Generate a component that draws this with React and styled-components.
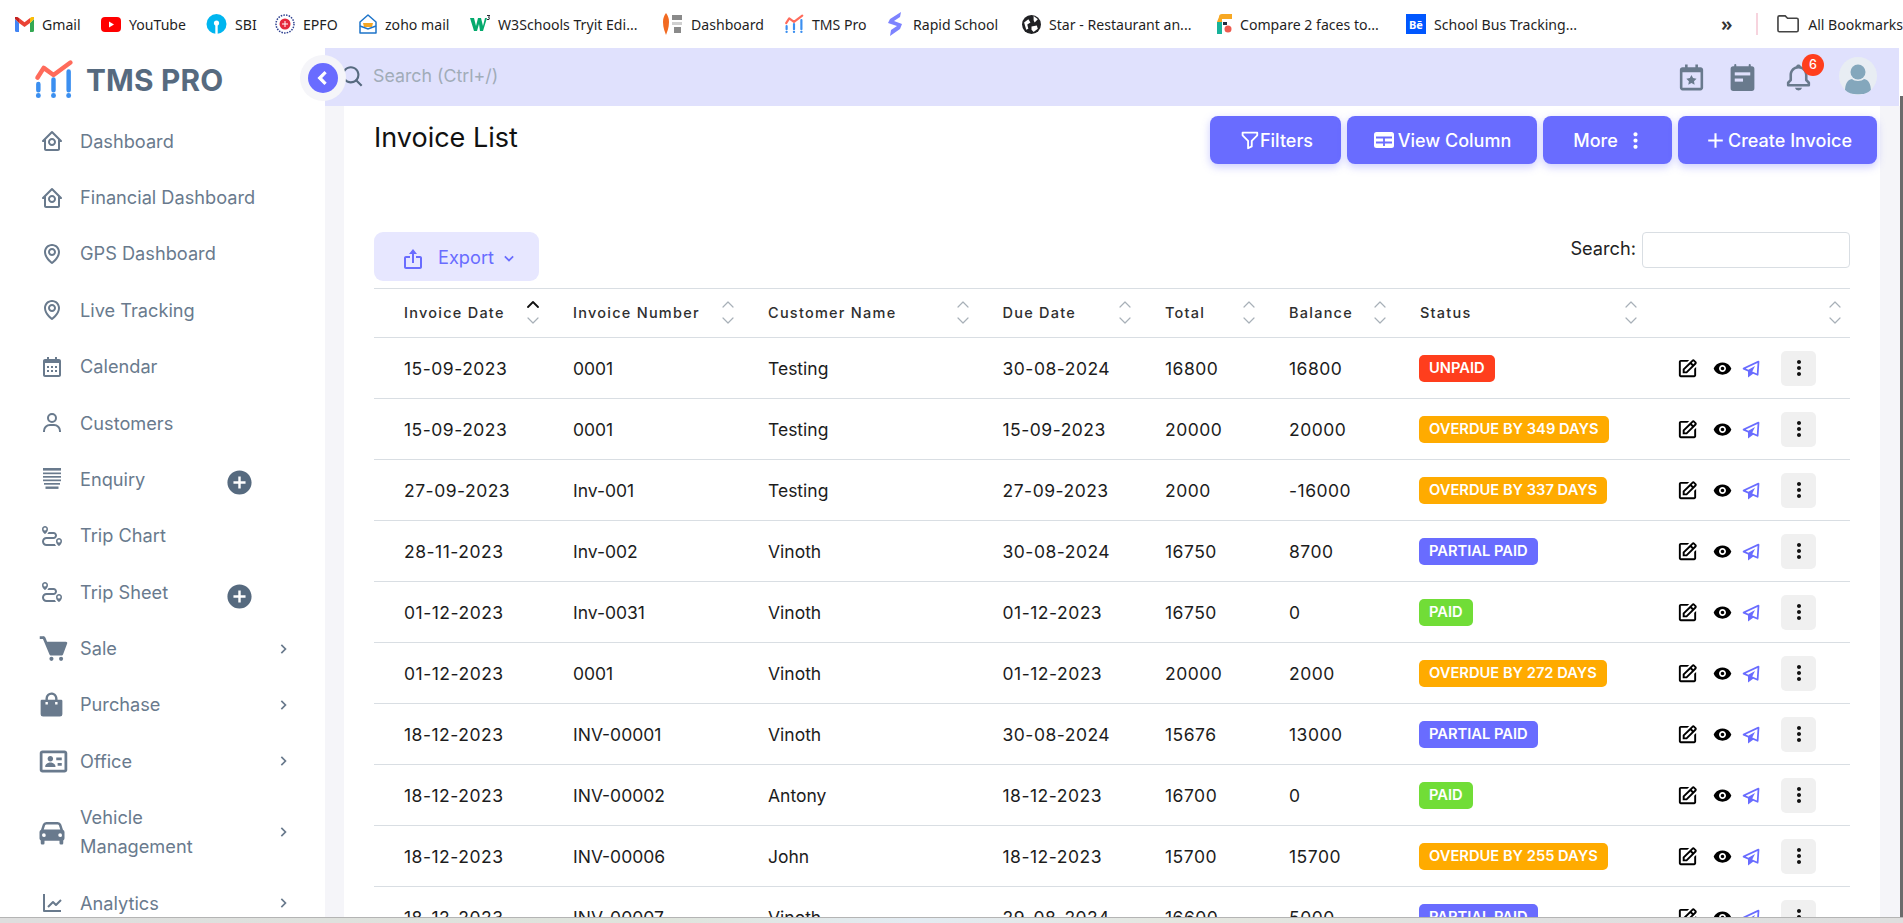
import React from "react"
import styled, { createGlobalStyle } from "styled-components"
import {
  BiHomeCircle, BiMap, BiCalendar, BiUser, BiTrip, BiSolidCart, BiSolidShoppingBag,
  BiIdCard, BiSolidCar, BiLineChart, BiChevronRight, BiChevronLeft, BiChevronDown, BiSearch,
  BiExport, BiFilterAlt, BiPlus, BiSolidPlusCircle, BiCalendarStar, BiBell,
  BiDotsVerticalRounded, BiEdit, BiSolidShow, BiPaperPlane,
} from "react-icons/bi"

const PRIMARY = "#696cff"
const SLATE = "#697a8d"
const PAGE_BG = "#f5f5f9"
const LINE = "#d9dee3"
const FONT = `Inter, "Noto Sans", sans-serif`

const GlobalStyle = createGlobalStyle`
  html, body { margin: 0; padding: 0; background: #fff; overflow: hidden; }
  * { box-sizing: border-box; }
`

const Shell = styled.div`
  position: relative;
  width: 1903px;
  height: 923px;
  display: flex;
  flex-direction: column;
  overflow: hidden;
  font-family: ${FONT};
  background: #fff;
`

/* browser bookmarks strip */
const BookmarkBar = styled.div`
  height: 48px;
  flex: none;
  display: flex;
  align-items: center;
  padding-left: 15px;
  background: #fff;
  font-family: "Noto Sans", sans-serif;
  font-size: 14.1px;
  color: #1f1f1f;
`

const Bookmark = styled.div`
  width: ${p => p.$w}px;
  flex: none;
  display: flex;
  align-items: center;
  gap: ${p => p.$gap || 8}px;
  white-space: nowrap;
`

const OverflowMark = styled.div`
  width: 35px;
  font-size: 20px;
  font-weight: 600;
  line-height: 1;
  color: #333;
`

const BarDivider = styled.div`
  width: 2px;
  height: 22px;
  background: #f7d4de;
  margin-right: 19px;
`

const BehanceIcon = styled.span`
  width: 20px;
  height: 20px;
  background: #0057ff;
  color: #fff;
  font-size: 11px;
  font-weight: 700;
  display: flex;
  align-items: center;
  justify-content: center;
`

const Main = styled.div`
  flex: 1;
  min-height: 0;
  display: flex;
  overflow: hidden;
`

const Sidebar = styled.aside`
  position: relative;
  width: 325px;
  flex: none;
  background: #fff;
  z-index: 2;
`

const Brand = styled.div`
  height: 65px;
  display: flex;
  align-items: center;
  gap: 12px;
  padding-left: 33px;
  padding-bottom: 2px;
`

const BrandName = styled.div`
  font-size: 29.8px;
  font-weight: 700;
  color: #566a7f;
  letter-spacing: 0.2px;
`

const Toggle = styled.button`
  position: absolute;
  top: 7px;
  left: 300px;
  width: 46px;
  height: 46px;
  border: 0;
  padding: 0;
  border-radius: 50%;
  background: ${PAGE_BG};
  display: flex;
  align-items: center;
  justify-content: center;
  z-index: 3;
`

const ToggleDot = styled.span`
  width: 30px;
  height: 30px;
  border-radius: 50%;
  background: ${PRIMARY};
  color: #fff;
  font-size: 26px;
  display: flex;
  align-items: center;
  justify-content: center;

  svg { stroke: #fff; stroke-width: 1; }
`

const NavRow = styled.div`
  display: flex;
  align-items: center;
  padding: 13.7px 0 13.7px 40px;
  font-size: 18.2px;
  line-height: 29px;
  color: ${SLATE};
`

const NavIcon = styled.span`
  width: 40px;
  height: 24px;
  flex: none;
  display: flex;
  align-items: center;
  font-size: ${p => p.$size || 24}px;
  margin-left: ${p => p.$nudge || 0}px;
  margin-right: ${p => -(p.$nudge || 0)}px;

  svg { flex: none; }
`

const NavLabel = styled.span`
  width: ${p => (p.$wrap ? "120px" : "auto")};
`

const NavPlus = styled.span`
  position: absolute;
  left: 225px;
  margin-top: ${p => p.$drop}px;
  font-size: 29px;
  display: flex;
  color: #566a7f;
`

const NavChevron = styled.span`
  position: absolute;
  left: 273px;
  font-size: 20px;
  display: flex;
`

const Workspace = styled.div`
  flex: 1;
  min-width: 0;
  display: flex;
  flex-direction: column;
  background: ${PAGE_BG};
`

const TopbarWrap = styled.div`
  flex: none;
  padding-right: 4px;
  background: #fff;
`

const Topbar = styled.header`
  height: 58px;
  display: flex;
  align-items: center;
  padding: 0 22px 0 17px;
  background: #e0e1fd;
`

const SearchIcon = styled.span`
  font-size: 26px;
  display: flex;
  margin-left: -2px;
  color: #566a7f;
`

const SearchHint = styled.span`
  margin-left: 7px;
  margin-bottom: 4px;
  font-size: 17.8px;
  color: #a1acb8;
`

const TopIcons = styled.div`
  margin-left: auto;
  display: flex;
  align-items: center;
`

const TopIcon = styled.span`
  position: relative;
  display: flex;
  font-size: 31px;
  color: ${SLATE};
  margin-left: ${p => p.$ml}px;
`

const CountBadge = styled.span`
  position: absolute;
  top: -8px;
  left: 19px;
  width: 22px;
  height: 22px;
  border-radius: 50%;
  background: #ff3e1d;
  color: #fff;
  font-size: 12.5px;
  font-weight: 500;
  display: flex;
  align-items: center;
  justify-content: center;
`

const Avatar = styled.div`
  width: 38px;
  height: 38px;
  margin-left: 25px;
  margin-bottom: 2px;
  border-radius: 50%;
  background: #e8edf3;
  overflow: hidden;
`

const Card = styled.section`
  flex: 1;
  min-height: 0;
  margin: 0 23px 0 19px;
  padding: 10px 30px 0;
  background: #fff;
`

const CardHead = styled.div`
  display: flex;
  justify-content: space-between;
  align-items: flex-start;
  margin-right: -27px;
`

const Title = styled.h1`
  margin: 6px 0 0;
  font-size: 27px;
  line-height: 32px;
  font-weight: 400;
  color: #111;
`

const Actions = styled.div`
  display: flex;
  gap: 6px;
`

const PrimaryButton = styled.button`
  width: ${p => p.$w}px;
  height: 48px;
  border: 0;
  padding: 0 0 0 ${p => p.$shift || 0}px;
  border-radius: 8px;
  background: ${PRIMARY};
  color: #fff;
  font-family: ${FONT};
  font-size: 18px;
  font-weight: 500;
  display: flex;
  align-items: center;
  justify-content: center;
  gap: ${p => p.$gap || 0}px;
  box-shadow: 0 3px 8px rgba(105, 108, 255, 0.35);

  svg { font-size: ${p => p.$icon || 22}px; flex: none; }
`

const Toolbar = styled.div`
  display: flex;
  justify-content: space-between;
  align-items: flex-start;
  margin: 68px 0 7px;
`

const ExportButton = styled.button`
  width: 165px;
  height: 49px;
  border: 0;
  padding: 0 0 0 27px;
  border-radius: 9px;
  background: #e7e7ff;
  color: ${PRIMARY};
  font-family: ${FONT};
  font-size: 18.2px;
  display: flex;
  align-items: center;
`

const ExportIcon = styled.span`
  display: flex;
  font-size: 24px;
  margin: 5px 13px 0 0;
`

const ExportCaret = styled.span`
  display: flex;
  font-size: 20px;
  margin: 2px 0 0 5px;
`

const TableSearch = styled.label`
  display: flex;
  align-items: flex-start;
  gap: 6px;
  font-size: 18.2px;
  color: #222;
  line-height: 32px;
`

const SearchBox = styled.input`
  width: 208px;
  height: 36px;
  border: 1px solid ${LINE};
  border-radius: 4px;
  background: #fff;
`

const Table = styled.table`
  width: 1476px;
  table-layout: fixed;
  border-collapse: collapse;
  border-top: 1px solid ${LINE};
`

const HeadCell = styled.th`
  height: 49px;
  padding: 0 ${p => p.$pr || 4}px 0 30px;
  border-bottom: 1px solid ${LINE};
  text-align: left;
  font-size: 14.5px;
  font-weight: 500;
  letter-spacing: 1.25px;
  color: #2f2f2f;
`

const HeadInner = styled.div`
  display: flex;
  align-items: center;
  justify-content: space-between;

  span { margin-top: -2px; }
`

const Cell = styled.td`
  height: 61px;
  padding: 0 0 0 30px;
  border-bottom: 1px solid ${LINE};
  font-size: 17.5px;
  letter-spacing: ${p => (p.$num ? "0.5px" : "0")};
  color: #1c1c1c;
  white-space: nowrap;
`

const StatusBadge = styled.span`
  display: inline-block;
  padding: 0 10px;
  height: 27px;
  line-height: 27px;
  border-radius: 5px;
  margin-left: -1px;
  font-size: 14.7px;
  font-weight: 600;
  color: #fff;
  background: ${p => p.$color};
`

const RowActions = styled.div`
  display: flex;
  align-items: center;
  margin-left: 5px;
`

const RowIcon = styled.span`
  display: flex;
  font-size: ${p => p.$size}px;
  margin-left: ${p => p.$ml || 0}px;
  color: ${p => p.$color || "#000"};
`

const DotsButton = styled.span`
  width: 35px;
  height: 35px;
  margin-left: 19px;
  border-radius: 5px;
  background: #f0f0f0;
  font-size: 24px;
  color: #111;
  display: flex;
  align-items: center;
  justify-content: center;
`

const ScrollThumb = styled.div`
  position: absolute;
  top: 96px;
  right: 0;
  bottom: 6px;
  width: 3px;
  background: #6b6b6b;
  z-index: 4;
`

const BottomEdge = styled.div`
  height: 6px;
  flex: none;
  border-top: 1px solid #b4b4b4;
  background: linear-gradient(90deg, #dedede 0%, #dfe4dc 35%, #e3ebf2 48%, #e4e6df 62%, #e0e0e0 80%, #dedede 100%);
`

function TmsLogo({ size }) {
  return (
    <svg width={size} height={size} viewBox="30 55 46 46" fill="none">
      <path d="M35 76l7-11 11 8 19-14" stroke="#ff6b5b" strokeWidth="5" strokeLinecap="round" strokeLinejoin="round" />
      <path d="M36 83v7M53 78v12M70 69v21" stroke="#3b8ff0" strokeWidth="5" strokeLinecap="round" />
      <path d="M36 96v.1M53 96v.1M70 96v.1" stroke="#3b8ff0" strokeWidth="5.5" strokeLinecap="round" />
    </svg>
  )
}

const GmailIcon = () => (
  <svg width="19" height="15" viewBox="0 0 19 15">
    <path d="M0 2v11.500A1.500 1.500 0 0 0 1.500 15H4V6z" fill="#4285f4" />
    <path d="M19 2v11.500a1.500 1.500 0 0 1-1.500 1.500H15V6z" fill="#34a853" />
    <path d="M4 6V1L9.500 5.200 15 1v5L9.500 10z" fill="#ea4335" />
    <path d="M15 1l1.600-1A1.500 1.500 0 0 1 19 2L15 6z" fill="#fbbc04" />
    <path d="M4 1L2.400 0A1.500 1.500 0 0 0 0 2l4 4z" fill="#c5221f" />
  </svg>
)

const YoutubeIcon = () => (
  <svg width="20" height="15" viewBox="0 0 20 15">
    <rect width="20" height="15" rx="4" fill="#f00" />
    <path d="M8 4.500v6l5-3z" fill="#fff" />
  </svg>
)

const SbiIcon = () => (
  <svg width="21" height="22" viewBox="0 0 21 22">
    <circle cx="10.500" cy="11" r="10" fill="#00b5ef" />
    <circle cx="10.500" cy="10" r="2.600" fill="#fff" />
    <rect x="9.300" y="11" width="2.400" height="11" fill="#fff" />
  </svg>
)

const EpfoIcon = () => (
  <svg width="20" height="20" viewBox="0 0 20 20">
    <circle cx="10" cy="10" r="9" fill="none" stroke="#2d3f8f" strokeWidth="1.500" strokeDasharray="1.500 1.200" />
    <circle cx="10" cy="10" r="5.500" fill="#e5283c" />
    <path d="M7 10h6M10 7v6" stroke="#fff" strokeWidth="1" />
  </svg>
)

const ZohoIcon = () => (
  <svg width="18" height="20" viewBox="0 0 18 20" fill="none">
    <path d="M1 8l8-7 8 7v11H1z" stroke="#1e74c9" strokeWidth="1.500" strokeLinejoin="round" />
    <path d="M4 9h10l-1 4H5z" fill="#f5a623" />
    <path d="M1 12l8 3 8-3" stroke="#1e74c9" strokeWidth="1.500" />
  </svg>
)

const W3Icon = () => (
  <svg width="20" height="18" viewBox="0 0 20 18">
    <path d="M0 3h4l2 8 2-8h3l2 8 2-8h2l-4 13h-3L9 9l-2 7H4z" fill="#04aa6d" />
    <path d="M17 0h3v1l-1 1 1 1-1 2h-2v-1h1.500l.5-.8-1-.6.8-1.600H17z" fill="#282a35" />
  </svg>
)

const MillIcon = () => (
  <svg width="21" height="24" viewBox="0 0 21 24">
    <path d="M4 1c2 3 3 5 3 9 0 6-2 10-3 13-1-3-3-7-3-13 0-4 1-6 3-9z" fill="#f26a21" />
    <path d="M10 3h10v5H10zM12 15h7v6h-7z" fill="#8a8a8a" />
    <path d="M10 10h10v3H10z" fill="#d0d0d0" />
  </svg>
)

const RapidIcon = () => (
  <svg width="15" height="24" viewBox="0 0 15 24">
    <path d="M13 0L2 7 0 11l9 3-6 4-1 6 10-7 2-5-8-3 6-4z" fill="#7d83ff" />
  </svg>
)

const GlobeIcon = () => (
  <svg width="19" height="19" viewBox="0 0 18 18">
    <circle cx="9" cy="9" r="9" fill="#202124" />
    <path d="M2 7l4-3 2 3-3 2 1 4-2 1zM11 1l4 3-3 3-1-2zM9 11l5-1 1 3-4 3-2-2z" fill="#fff" />
  </svg>
)

const CompareIcon = () => (
  <svg width="15" height="20" viewBox="0 0 15 20">
    <path d="M2 3a3 3 0 0 1 3-3h10v5H5v15H0V8z" fill="#f7a823" />
    <path d="M0 8h5v12H0z" fill="#17b29a" />
    <circle cx="11" cy="15" r="3.500" fill="#ee5a4e" />
    <path d="M6 8h4v3H6z" fill="#203040" />
  </svg>
)

const FolderIcon = () => (
  <svg width="23" height="20" viewBox="0 0 23 20" fill="none">
    <path d="M1 3a1.500 1.500 0 0 1 1.500-1.500h6L11 4h9.500A1.500 1.500 0 0 1 22 5.500v11a1.500 1.500 0 0 1-1.500 1.500h-18A1.500 1.500 0 0 1 1 16.500z" stroke="#444" strokeWidth="1.700" />
  </svg>
)

const AvatarFigure = () => (
  <svg width="38" height="38" viewBox="0 0 38 38">
    <circle cx="19" cy="15" r="7.500" fill="#84a7bc" />
    <path d="M6 35c0-8 2-12 7-13 2 2.500 10 2.500 12 0 5 1 7 5 7 13-4 3-22 3-26 0z" fill="#84a7bc" />
  </svg>
)

const SortIcon = ({ active }) => (
  <svg width="12" height="26" viewBox="0 0 12 26" fill="none" strokeLinecap="round" strokeLinejoin="round">
    <path d="M1 7l5-5 5 5" stroke={active ? "#111" : "#a8b0b8"} strokeWidth={active ? 1.800 : 1.200} />
    <path d="M1 18l5 5 5-5" stroke="#a8b0b8" strokeWidth="1.200" />
  </svg>
)

const EnquiryIcon = () => (
  <svg width="24" height="24" viewBox="0 0 24 24" fill="currentColor">
    <rect x="3" y="1" width="18" height="2.600" />
    <rect x="3" y="5.500" width="18" height="1.700" />
    <rect x="3" y="9" width="18" height="1.700" />
    <rect x="3" y="12.500" width="18" height="1.700" />
    <rect x="4" y="16" width="16" height="1.700" />
    <rect x="5.500" y="19.500" width="13" height="2.400" />
  </svg>
)

const NotesIcon = () => (
  <svg width="1em" height="1em" viewBox="0 0 30 30" fill="currentColor">
    <path d="M7 3a1 1 0 0 1 2 0v1h12V3a1 1 0 0 1 2 0v1h1a2.500 2.500 0 0 1 2.500 2.500v19A2.500 2.500 0 0 1 24 28H6a2.500 2.500 0 0 1-2.500-2.500v-19A2.500 2.500 0 0 1 6 4h1z" />
    <rect x="7.500" y="10" width="15" height="3" fill="#e0e1fd" />
    <rect x="7.500" y="16" width="8" height="3" fill="#e0e1fd" />
  </svg>
)

const GridIcon = () => (
  <svg width="1em" height="1em" viewBox="0 0 22 22">
    <rect x="1" y="3" width="20" height="16" rx="2.500" fill="#fff" />
    <path d="M3 8.500h16M3 13.500h16M11 8.500v8.500" stroke="#696cff" strokeWidth="1.800" />
  </svg>
)

const bookmarks = [
  { w: 86, icon: <GmailIcon />, label: "Gmail" },
  { w: 105, icon: <YoutubeIcon />, label: "YouTube" },
  { w: 69, icon: <SbiIcon />, label: "SBI" },
  { w: 84, icon: <EpfoIcon />, label: "EPFO" },
  { w: 111, icon: <ZohoIcon />, label: "zoho mail" },
  { w: 192, icon: <W3Icon />, label: "W3Schools Tryit Edi..." },
  { w: 122, icon: <MillIcon />, label: "Dashboard" },
  { w: 104, icon: <TmsLogo size={20} />, label: "TMS Pro" },
  { w: 134, icon: <RapidIcon />, label: "Rapid School", gap: 10 },
  { w: 195, icon: <GlobeIcon />, label: "Star - Restaurant an..." },
  { w: 189, icon: <CompareIcon />, label: "Compare 2 faces to..." },
  { w: 315, icon: <BehanceIcon>Bē</BehanceIcon>, label: "School Bus Tracking..." },
]

const navItems = [
  { label: "Dashboard", icon: <BiHomeCircle /> },
  { label: "Financial Dashboard", icon: <BiHomeCircle /> },
  { label: "GPS Dashboard", icon: <BiMap /> },
  { label: "Live Tracking", icon: <BiMap /> },
  { label: "Calendar", icon: <BiCalendar /> },
  { label: "Customers", icon: <BiUser /> },
  { label: "Enquiry", icon: <EnquiryIcon />, plus: 6 },
  { label: "Trip Chart", icon: <BiTrip /> },
  { label: "Trip Sheet", icon: <BiTrip />, plus: 9 },
  { label: "Sale", icon: <BiSolidCart />, size: 33, nudge: -3, more: true },
  { label: "Purchase", icon: <BiSolidShoppingBag />, size: 29, nudge: -3, more: true },
  { label: "Office", icon: <BiIdCard />, size: 33, nudge: -3, more: true },
  { label: "Vehicle Management", icon: <BiSolidCar />, size: 30, nudge: -3, more: true, wrap: true },
  { label: "Analytics", icon: <BiLineChart />, more: true },
]

const columns = [
  { label: "Invoice Date", width: 169, active: true },
  { label: "Invoice Number", width: 195 },
  { label: "Customer Name", width: 234.5 },
  { label: "Due Date", width: 162.5 },
  { label: "Total", width: 124 },
  { label: "Balance", width: 131 },
  { label: "Status", width: 251 },
  { label: "", width: 209, pr: 9 },
]

const STATUS_COLORS = { unpaid: "#ff3e1d", overdue: "#ffab00", partial: "#696cff", paid: "#71dd37" }

// date and amount columns run a touch wider than the names
const NUMERIC_COLS = [0, 3, 4, 5]

const invoices = [
  ["15-09-2023", "0001", "Testing", "30-08-2024", "16800", "16800", "UNPAID", "unpaid"],
  ["15-09-2023", "0001", "Testing", "15-09-2023", "20000", "20000", "OVERDUE BY 349 DAYS", "overdue"],
  ["27-09-2023", "Inv-001", "Testing", "27-09-2023", "2000", "-16000", "OVERDUE BY 337 DAYS", "overdue"],
  ["28-11-2023", "Inv-002", "Vinoth", "30-08-2024", "16750", "8700", "PARTIAL PAID", "partial"],
  ["01-12-2023", "Inv-0031", "Vinoth", "01-12-2023", "16750", "0", "PAID", "paid"],
  ["01-12-2023", "0001", "Vinoth", "01-12-2023", "20000", "2000", "OVERDUE BY 272 DAYS", "overdue"],
  ["18-12-2023", "INV-00001", "Vinoth", "30-08-2024", "15676", "13000", "PARTIAL PAID", "partial"],
  ["18-12-2023", "INV-00002", "Antony", "18-12-2023", "16700", "0", "PAID", "paid"],
  ["18-12-2023", "INV-00006", "John", "18-12-2023", "15700", "15700", "OVERDUE BY 255 DAYS", "overdue"],
  ["18-12-2023", "INV-00007", "Vinoth", "29-08-2024", "16600", "5000", "PARTIAL PAID", "partial"],
]

export default function App() {
  return (
    <Shell>
      <GlobalStyle />
      <BookmarkBar>
        {bookmarks.map(b => (
          <Bookmark key={b.label} $w={b.w} $gap={b.gap}>
            {b.icon}
            <span>{b.label}</span>
          </Bookmark>
        ))}
        <OverflowMark>»</OverflowMark>
        <BarDivider />
        <Bookmark $w={126} $gap={9}>
          <FolderIcon />
          <span>All Bookmarks</span>
        </Bookmark>
      </BookmarkBar>

      <Main>
        <Sidebar>
          <Brand>
            <TmsLogo size={41} />
            <BrandName>TMS PRO</BrandName>
          </Brand>
          <Toggle>
            <ToggleDot><BiChevronLeft /></ToggleDot>
          </Toggle>
          <nav>
            {navItems.map(item => (
              <NavRow key={item.label}>
                <NavIcon $size={item.size} $nudge={item.nudge}>{item.icon}</NavIcon>
                <NavLabel $wrap={item.wrap}>{item.label}</NavLabel>
                {item.plus && <NavPlus $drop={item.plus}><BiSolidPlusCircle /></NavPlus>}
                {item.more && <NavChevron><BiChevronRight /></NavChevron>}
              </NavRow>
            ))}
          </nav>
        </Sidebar>

        <Workspace>
          <TopbarWrap>
            <Topbar>
              <SearchIcon><BiSearch /></SearchIcon>
              <SearchHint>Search (Ctrl+/)</SearchHint>
              <TopIcons>
                <TopIcon $ml={0}><BiCalendarStar /></TopIcon>
                <TopIcon $ml={20}><NotesIcon /></TopIcon>
                <TopIcon $ml={25}>
                  <BiBell />
                  <CountBadge>6</CountBadge>
                </TopIcon>
                <Avatar><AvatarFigure /></Avatar>
              </TopIcons>
            </Topbar>
          </TopbarWrap>

          <Card>
            <CardHead>
              <Title>Invoice List</Title>
              <Actions>
                <PrimaryButton $w={131}><BiFilterAlt />Filters</PrimaryButton>
                <PrimaryButton $w={190} $gap={3} $icon={22}><GridIcon />View Column</PrimaryButton>
                <PrimaryButton $w={129} $gap={5} $icon={25} $shift={6}>More<BiDotsVerticalRounded /></PrimaryButton>
                <PrimaryButton $w={199} $icon={25}><BiPlus />Create Invoice</PrimaryButton>
              </Actions>
            </CardHead>

            <Toolbar>
              <ExportButton>
                <ExportIcon><BiExport /></ExportIcon>
                Export
                <ExportCaret><BiChevronDown /></ExportCaret>
              </ExportButton>
              <TableSearch>
                Search:
                <SearchBox />
              </TableSearch>
            </Toolbar>

            <Table>
              <colgroup>
                {columns.map((c, i) => <col key={i} width={c.width} />)}
              </colgroup>
              <thead>
                <tr>
                  {columns.map((c, i) => (
                    <HeadCell key={i} $pr={c.pr}>
                      <HeadInner>
                        <span>{c.label}</span>
                        <SortIcon active={c.active} />
                      </HeadInner>
                    </HeadCell>
                  ))}
                </tr>
              </thead>
              <tbody>
                {invoices.map((row, i) => (
                  <tr key={i}>
                    {row.slice(0, 6).map((val, j) => <Cell key={j} $num={NUMERIC_COLS.includes(j)}>{val}</Cell>)}
                    <Cell><StatusBadge $color={STATUS_COLORS[row[7]]}>{row[6]}</StatusBadge></Cell>
                    <Cell>
                      <RowActions>
                        <RowIcon $size={23}><BiEdit /></RowIcon>
                        <RowIcon $size={21} $ml={13}><BiSolidShow /></RowIcon>
                        <RowIcon $size={21} $ml={8} $color={PRIMARY}><BiPaperPlane /></RowIcon>
                        <DotsButton><BiDotsVerticalRounded /></DotsButton>
                      </RowActions>
                    </Cell>
                  </tr>
                ))}
              </tbody>
            </Table>
          </Card>
        </Workspace>
      </Main>

      <BottomEdge />
      <ScrollThumb />
    </Shell>
  )
}
